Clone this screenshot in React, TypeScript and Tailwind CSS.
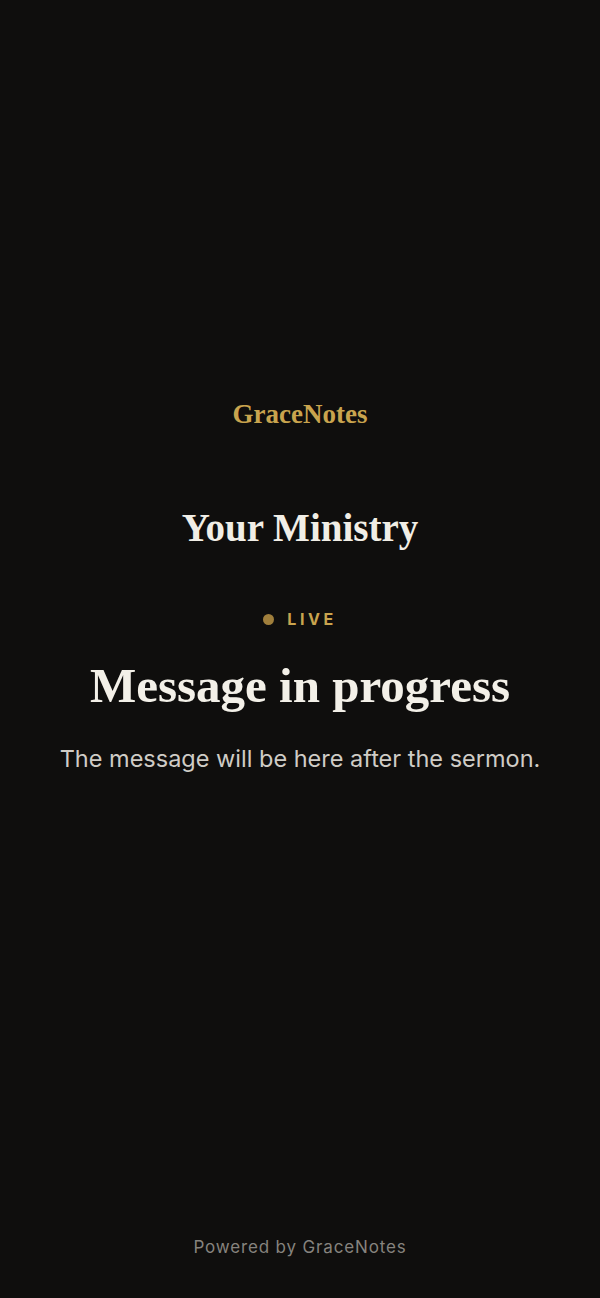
import React from "react";

export default function App() {
  return (
    <div className="flex h-[1298px] w-full flex-col items-center bg-[#0f0e0d] font-['Inter',sans-serif]">
      <main className="flex w-full flex-col items-center pt-[397px] text-center">
        <div className="font-['Liberation_Serif',serif] text-[27px] font-bold leading-[34px] text-[#c9a44e]">GraceNotes</div>
        <h1 className="mt-[72px] font-['Liberation_Serif',serif] text-[39px] font-bold leading-[50px] text-[#f1eee6]">Your Ministry</h1>
        <div className="mt-[56px] flex items-center gap-[13px]">
          <span className="h-[11px] w-[11px] rounded-full bg-[#a07f3c]" />
          <span className="text-[16px] font-bold leading-[20px] tracking-[0.22em] text-[#c9a44e]">LIVE</span>
        </div>
        <h2 className="mt-[27px] font-['Liberation_Serif',serif] text-[49px] font-bold leading-[60px] text-[#f3f0e8]">Message in progress</h2>
        <p className="mt-[28px] text-[23.5px] leading-[30px] text-[#cfccc6]">The message will be here after the sermon.</p>
      </main>
      <footer className="mt-auto pb-[40px] text-[17px] leading-[22px] tracking-[0.05em] text-[#86837e]">Powered by GraceNotes</footer>
    </div>
  );
}
